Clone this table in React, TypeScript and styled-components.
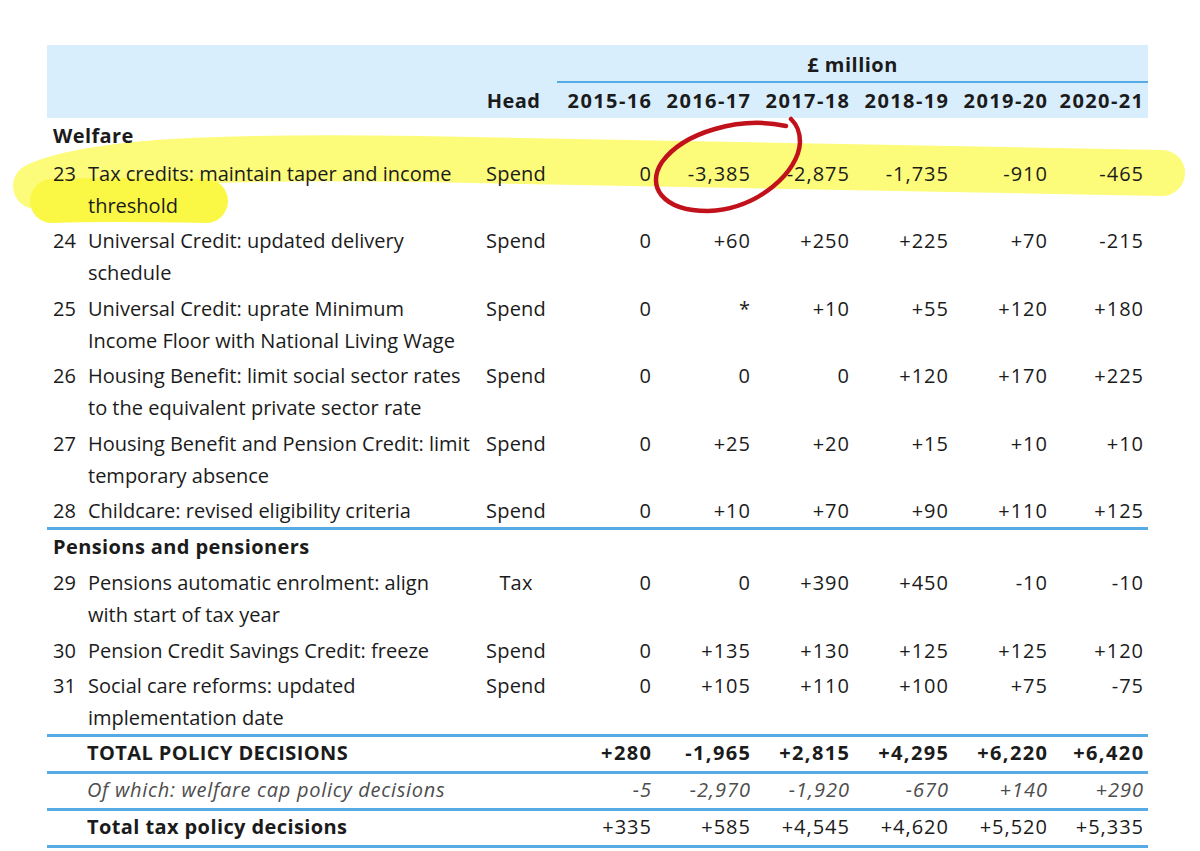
import * as React from 'react';
import styled, { createGlobalStyle } from 'styled-components';

const GlobalStyle = createGlobalStyle`
  html, body {
    margin: 0;
    padding: 0;
    background: #ffffff;
  }
`;

const INK = '#1b1b1b';
const RULE = '#56abe4';
const BAND = '#d9eefc';

const Page = styled.div`
  position: relative;
  width: 1200px;
  height: 851px;
  box-sizing: border-box;
  padding: 45px 0 0 47px;
  background: #fff;
  overflow: hidden;
  font-family: 'Open Sans', 'Noto Sans', sans-serif;
  color: ${INK};
`;

const Table = styled.table`
  position: relative;
  z-index: 1;
  width: 1101px;
  table-layout: fixed;
  border-collapse: collapse;
  border-spacing: 0;
  font-size: 20px;
  line-height: 32px;
`;

const HeadBand = styled.thead`
  background: ${BAND};
`;

const Unit = styled.th`
  padding: 4px 0 0;
  text-align: center;
  font-weight: 700;
  letter-spacing: 0.5px;
  border-bottom: 2px solid ${RULE};
`;

const ColLabel = styled.th<{ $head?: boolean }>`
  padding: 2px ${p => (p.$head ? '8px' : '3.6px')} 1px 0;
  text-align: ${p => (p.$head ? 'center' : 'right')};
  font-weight: 700;
  letter-spacing: ${p => (p.$head ? '0.4px' : '1.4px')};
  white-space: nowrap;
`;

const Blank = styled.th`
  padding: 0;
`;

const Row = styled.tr<{ $rule?: boolean; $tight?: boolean }>`
  border-bottom: ${p => (p.$rule ? `3px solid ${RULE}` : 'none')};
  td {
    padding-top: ${p => (p.$tight ? '0' : '2px')};
    padding-bottom: ${p => (p.$tight ? '2px' : p.$rule ? '0' : '1.5px')};
  }
`;

const Section = styled.td<{ $first?: boolean }>`
  padding: ${p => (p.$first ? '2px 0 3.5px 6px' : '1px 0 2px 6px')};
  font-weight: 700;
  letter-spacing: 0.4px;
  white-space: nowrap;
`;

const Desc = styled.td`
  padding-left: 6px;
  vertical-align: top;
`;

const DescInner = styled.div`
  display: flex;
`;

const Num = styled.span`
  flex: 0 0 35px;
`;

const Lines = styled.div`
  display: flex;
  flex-direction: column;
  white-space: nowrap;
`;

const HeadCell = styled.td`
  text-align: center;
  vertical-align: top;
  padding-right: 4px;
  letter-spacing: 0.2px;
`;

const Value = styled.td<{ $bold?: boolean; $italic?: boolean }>`
  text-align: right;
  vertical-align: top;
  white-space: nowrap;
  padding-right: ${p => (p.$bold ? '3.6px' : '4px')};
  letter-spacing: ${p => (p.$bold ? '1.4px' : '1px')};
  font-weight: ${p => (p.$bold ? 700 : 400)};
  font-style: ${p => (p.$italic ? 'italic' : 'normal')};
  color: ${p => (p.$italic ? '#4d4d4d' : INK)};
`;

const TotalLabel = styled.td<{ $bold?: boolean; $italic?: boolean }>`
  padding-left: 40px;
  white-space: nowrap;
  letter-spacing: ${p => (p.$italic ? '0.7px' : '0.4px')};
  font-weight: ${p => (p.$bold ? 700 : 400)};
  font-style: ${p => (p.$italic ? 'italic' : 'normal')};
  color: ${p => (p.$italic ? '#4d4d4d' : INK)};
`;

const Layer = styled.svg<{ $front?: boolean }>`
  position: absolute;
  left: 0;
  top: 0;
  z-index: ${p => (p.$front ? 2 : 0)};
  pointer-events: none;
`;

const Stroke = styled.path<{ $tone: string }>`
  fill: none;
  stroke: ${p => p.$tone};
  stroke-linecap: round;
  stroke-linejoin: round;
`;

interface Item {
  n: number;
  lines: string[];
  head: string;
  vals: string[];
}

interface Group {
  title: string;
  items: Item[];
}

const YEARS = ['2015-16', '2016-17', '2017-18', '2018-19', '2019-20', '2020-21'];

const groups: Group[] = [
  {
    title: 'Welfare',
    items: [
      { n: 23, lines: ['Tax credits: maintain taper and income', 'threshold'], head: 'Spend', vals: ['0', '-3,385', '-2,875', '-1,735', '-910', '-465'] },
      { n: 24, lines: ['Universal Credit: updated delivery', 'schedule'], head: 'Spend', vals: ['0', '+60', '+250', '+225', '+70', '-215'] },
      { n: 25, lines: ['Universal Credit: uprate Minimum', 'Income Floor with National Living Wage'], head: 'Spend', vals: ['0', '*', '+10', '+55', '+120', '+180'] },
      { n: 26, lines: ['Housing Benefit: limit social sector rates', 'to the equivalent private sector rate'], head: 'Spend', vals: ['0', '0', '0', '+120', '+170', '+225'] },
      { n: 27, lines: ['Housing Benefit and Pension Credit: limit', 'temporary absence'], head: 'Spend', vals: ['0', '+25', '+20', '+15', '+10', '+10'] },
      { n: 28, lines: ['Childcare: revised eligibility criteria'], head: 'Spend', vals: ['0', '+10', '+70', '+90', '+110', '+125'] }
    ]
  },
  {
    title: 'Pensions and pensioners',
    items: [
      { n: 29, lines: ['Pensions automatic enrolment: align', 'with start of tax year'], head: 'Tax', vals: ['0', '0', '+390', '+450', '-10', '-10'] },
      { n: 30, lines: ['Pension Credit Savings Credit: freeze'], head: 'Spend', vals: ['0', '+135', '+130', '+125', '+125', '+120'] },
      { n: 31, lines: ['Social care reforms: updated', 'implementation date'], head: 'Spend', vals: ['0', '+105', '+110', '+100', '+75', '-75'] }
    ]
  }
];

const totals = [
  { label: 'TOTAL POLICY DECISIONS', bold: true, italic: false, boldVals: true, vals: ['+280', '-1,965', '+2,815', '+4,295', '+6,220', '+6,420'] },
  { label: 'Of which: welfare cap policy decisions', bold: false, italic: true, boldVals: false, vals: ['-5', '-2,970', '-1,920', '-670', '+140', '+290'] },
  { label: 'Total tax policy decisions', bold: true, italic: false, boldVals: false, vals: ['+335', '+585', '+4,545', '+4,620', '+5,520', '+5,335'] }
];

export default function App() {
  return (
    <Page>
      <GlobalStyle />
      {/* highlighter marks sit under the text */}
      <Layer width="1200" height="851" viewBox="0 0 1200 851">
        <Stroke $tone="#fdfc7a" strokeWidth="46" d="M 36 186 C 90 161, 220 156, 420 159 L 1162 173" />
        <Stroke $tone="#faf845" strokeWidth="44" d="M 52 201 C 100 199, 160 200, 206 201" />
      </Layer>
      <Table>
        <colgroup>
          <col style={{ width: 431 }} />
          <col style={{ width: 79 }} />
          <col style={{ width: 99 }} />
          <col style={{ width: 99 }} />
          <col style={{ width: 99 }} />
          <col style={{ width: 99 }} />
          <col style={{ width: 99 }} />
          <col style={{ width: 96 }} />
        </colgroup>
        <HeadBand>
          <tr>
            <Blank />
            <Blank />
            <Unit colSpan={6}>£ million</Unit>
          </tr>
          <tr>
            <Blank />
            <ColLabel $head>Head</ColLabel>
            {YEARS.map(y => (
              <ColLabel key={y}>{y}</ColLabel>
            ))}
          </tr>
        </HeadBand>
        <tbody>
          {groups.map((g, gi) => (
            <React.Fragment key={g.title}>
              <tr>
                <Section colSpan={8} $first={gi === 0}>
                  {g.title}
                </Section>
              </tr>
              {g.items.map((it, i) => (
                <Row key={it.n} $rule={i === g.items.length - 1}>
                  <Desc>
                    <DescInner>
                      <Num>{it.n}</Num>
                      <Lines>
                        {it.lines.map(l => (
                          <span key={l}>{l}</span>
                        ))}
                      </Lines>
                    </DescInner>
                  </Desc>
                  <HeadCell>{it.head}</HeadCell>
                  {it.vals.map((v, vi) => (
                    <Value key={vi}>{v}</Value>
                  ))}
                </Row>
              ))}
            </React.Fragment>
          ))}
          {totals.map(t => (
            <Row key={t.label} $rule $tight>
              <TotalLabel colSpan={2} $bold={t.bold} $italic={t.italic}>
                {t.label}
              </TotalLabel>
              {t.vals.map((v, vi) => (
                <Value key={vi} $bold={t.boldVals} $italic={t.italic}>
                  {v}
                </Value>
              ))}
            </Row>
          ))}
        </tbody>
      </Table>
      {/* red pen loop drawn over the figures */}
      <Layer $front width="1200" height="851" viewBox="0 0 1200 851">
        <Stroke
          $tone="#c1121c"
          strokeWidth="4.5"
          d="M 786 126 C 740 116, 684 132, 662 162 C 646 186, 662 211, 708 211 C 758 209, 799 172, 800 142 C 800 131, 797 125, 791 119"
        />
      </Layer>
    </Page>
  );
}
